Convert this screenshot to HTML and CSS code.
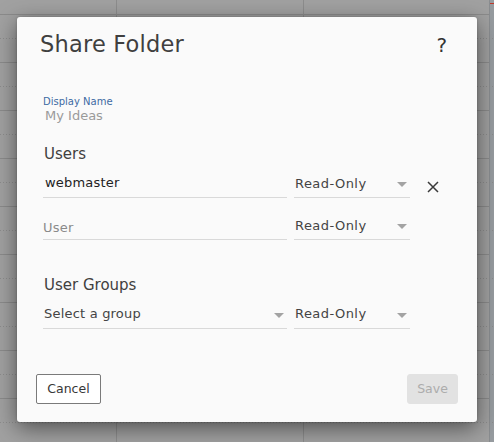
FILE: index.html
```html
<!DOCTYPE html>
<html>
<head>
<meta charset="utf-8">
<title>Share Folder</title>
<link rel="stylesheet" href="styles.css">
</head>
<body>
<div class="backdrop">
  <div class="dialog">
    <div class="dialog-header">
      <h1 class="dialog-title">Share Folder</h1>
      <span class="help">?</span>
    </div>
    <div class="dialog-body">
      <div class="static-field">
        <div class="static-label">Display Name</div>
        <div class="static-value">My Ideas</div>
      </div>
      <h2 class="section-title users-title">Users</h2>
      <div class="share-row row-first">
        <div class="field text-input"><span class="value value-user">webmaster</span></div>
        <div class="field select"><span class="value value-select">Read-Only</span><svg class="caret" width="10" height="5" viewBox="0 0 10 5"><polygon points="0,0 10,0 5,5"/></svg></div>
        <span class="remove"><svg width="12" height="12" viewBox="0 0 12 12"><path d="M1 1 L11 11 M11 1 L1 11"/></svg></span>
      </div>
      <div class="share-row row-new">
        <div class="field text-input"><span class="value value-placeholder">User</span></div>
        <div class="field select"><span class="value value-select2">Read-Only</span><svg class="caret" width="10" height="5" viewBox="0 0 10 5"><polygon points="0,0 10,0 5,5"/></svg></div>
      </div>
      <h2 class="section-title groups-title">User Groups</h2>
      <div class="share-row row-group">
        <div class="field text-input group-select"><span class="value value-group">Select a group</span><svg class="caret" width="10" height="5" viewBox="0 0 10 5"><polygon points="0,0 10,0 5,5"/></svg></div>
        <div class="field select"><span class="value value-select3">Read-Only</span><svg class="caret" width="10" height="5" viewBox="0 0 10 5"><polygon points="0,0 10,0 5,5"/></svg></div>
      </div>
    </div>
    <div class="dialog-footer">
      <button class="btn btn-cancel">Cancel</button>
      <button class="btn btn-save" disabled>Save</button>
    </div>
  </div>
</div>
</body>
</html>
```

FILE: styles.css
```css
html, body {
  margin: 0;
  padding: 0;
}
body {
  width: 494px;
  height: 442px;
  overflow: hidden;
  font-family: "DejaVu Sans", "Liberation Sans", sans-serif;
  background-color: #a1a1a1;
  background-image:
    linear-gradient(#c0392b, #c0392b),
    linear-gradient(to right,
      transparent 0 116px, #8d8d8d 116px 117px,
      transparent 117px 303px, #8d8d8d 303px 304px,
      transparent 304px 489px, #8a8d90 489px 490px,
      #979ca0 490px),
    repeating-linear-gradient(to bottom,
      transparent 0 14px, #8b8b8b 14px 15px, transparent 15px 48px);
  background-repeat: no-repeat, no-repeat, repeat;
  background-size: 4px 1px, 100% 100%, 100% 48px;
  background-position: 490px 3px, 0 0, 0 0;
}
.backdrop {
  position: relative;
  width: 494px;
  height: 442px;
  box-sizing: border-box;
  padding: 17px;
}
.backdrop::before {
  content: "";
  position: absolute;
  inset: 0;
  background: repeating-linear-gradient(to bottom,
    transparent 0 38px, #8c8c8c 38px 39px, transparent 39px 48px);
  -webkit-mask-image: repeating-linear-gradient(to right, #000 0 1px, transparent 1px 3px);
  mask-image: repeating-linear-gradient(to right, #000 0 1px, transparent 1px 3px);
}
.dialog {
  position: relative;
  z-index: 1;
  width: 460px;
  box-sizing: border-box;
  background: #fafafa;
  border-radius: 3px;
  box-shadow: 0 6px 22px rgba(0, 0, 0, 0.5), 0 0 3px rgba(0, 0, 0, 0.2);
  padding: 14px 0 18px;
}
.dialog-header {
  display: flex;
  align-items: flex-start;
  justify-content: space-between;
  height: 26px;
  padding: 0 30px 0 23px;
}
.dialog-title {
  margin: 0;
  font-size: 22.5px;
  letter-spacing: 0.2px;
  line-height: 26px;
  font-weight: normal;
  color: #3f3f3f;
}
.help {
  font-size: 20px;
  line-height: 28px;
  color: #333;
}
.dialog-body {
  padding: 39px 0 0 26px;
}
.static-label {
  font-size: 10px;
  line-height: 12px;
  color: #3d6aa3;
}
.static-value {
  font-size: 13px;
  line-height: 16px;
  color: #9a9a9a;
  padding-left: 2px;
}
.section-title {
  margin: 0;
  padding-left: 1px;
  font-size: 15px;
  line-height: 18px;
  font-weight: normal;
  color: #404040;
}
.users-title { margin-top: 21px; }
.groups-title { margin-top: 36px; }
.share-row {
  display: flex;
  align-items: flex-start;
  margin-top: 8px;
}
.row-new { margin-top: 15px; }
.field {
  display: flex;
  align-items: flex-end;
  height: 27px;
  box-sizing: border-box;
  border-bottom: 1px solid #d9d9d9;
  font-size: 13px;
  line-height: 16px;
  letter-spacing: 0.2px;
}
.text-input {
  width: 244px;
  margin-right: 7px;
}
.select {
  width: 116px;
  color: #444;
  letter-spacing: 0.45px;
}
.value { padding-left: 1px; }
.value-user { padding: 0 0 6.5px 2px; color: #222; }
.value-placeholder { padding: 0 0 3.5px 0; color: #8a8a8a; }
.value-select { padding-bottom: 5.5px; }
.value-select2 { padding-bottom: 5px; }
.value-select3 { padding-bottom: 6px; }
.value-group { padding-bottom: 6px; color: #444; }
.caret {
  margin-left: auto;
  margin-right: 3px;
  margin-bottom: 10px;
  fill: #a3a3a3;
}
.remove {
  display: block;
  width: 12px;
  height: 12px;
  margin: 10px 0 0 17px;
}
.remove svg {
  display: block;
  stroke: #3a3a3a;
  stroke-width: 1.5;
  fill: none;
}
.dialog-footer {
  display: flex;
  justify-content: space-between;
  margin-top: 45px;
  padding: 0 19px;
}
.btn {
  height: 30px;
  box-sizing: border-box;
  font-family: "DejaVu Sans", "Liberation Sans", sans-serif;
  font-size: 12.5px;
  line-height: 28px;
  padding: 0;
  border-radius: 2px;
}
.btn-cancel {
  width: 65px;
  background: #fff;
  border: 1px solid #7a7a7a;
  color: #383838;
}
.btn-save {
  width: 51px;
  background: #e2e2e2;
  border: 1px solid #e2e2e2;
  color: #acacac;
  border-radius: 3px;
}
```
